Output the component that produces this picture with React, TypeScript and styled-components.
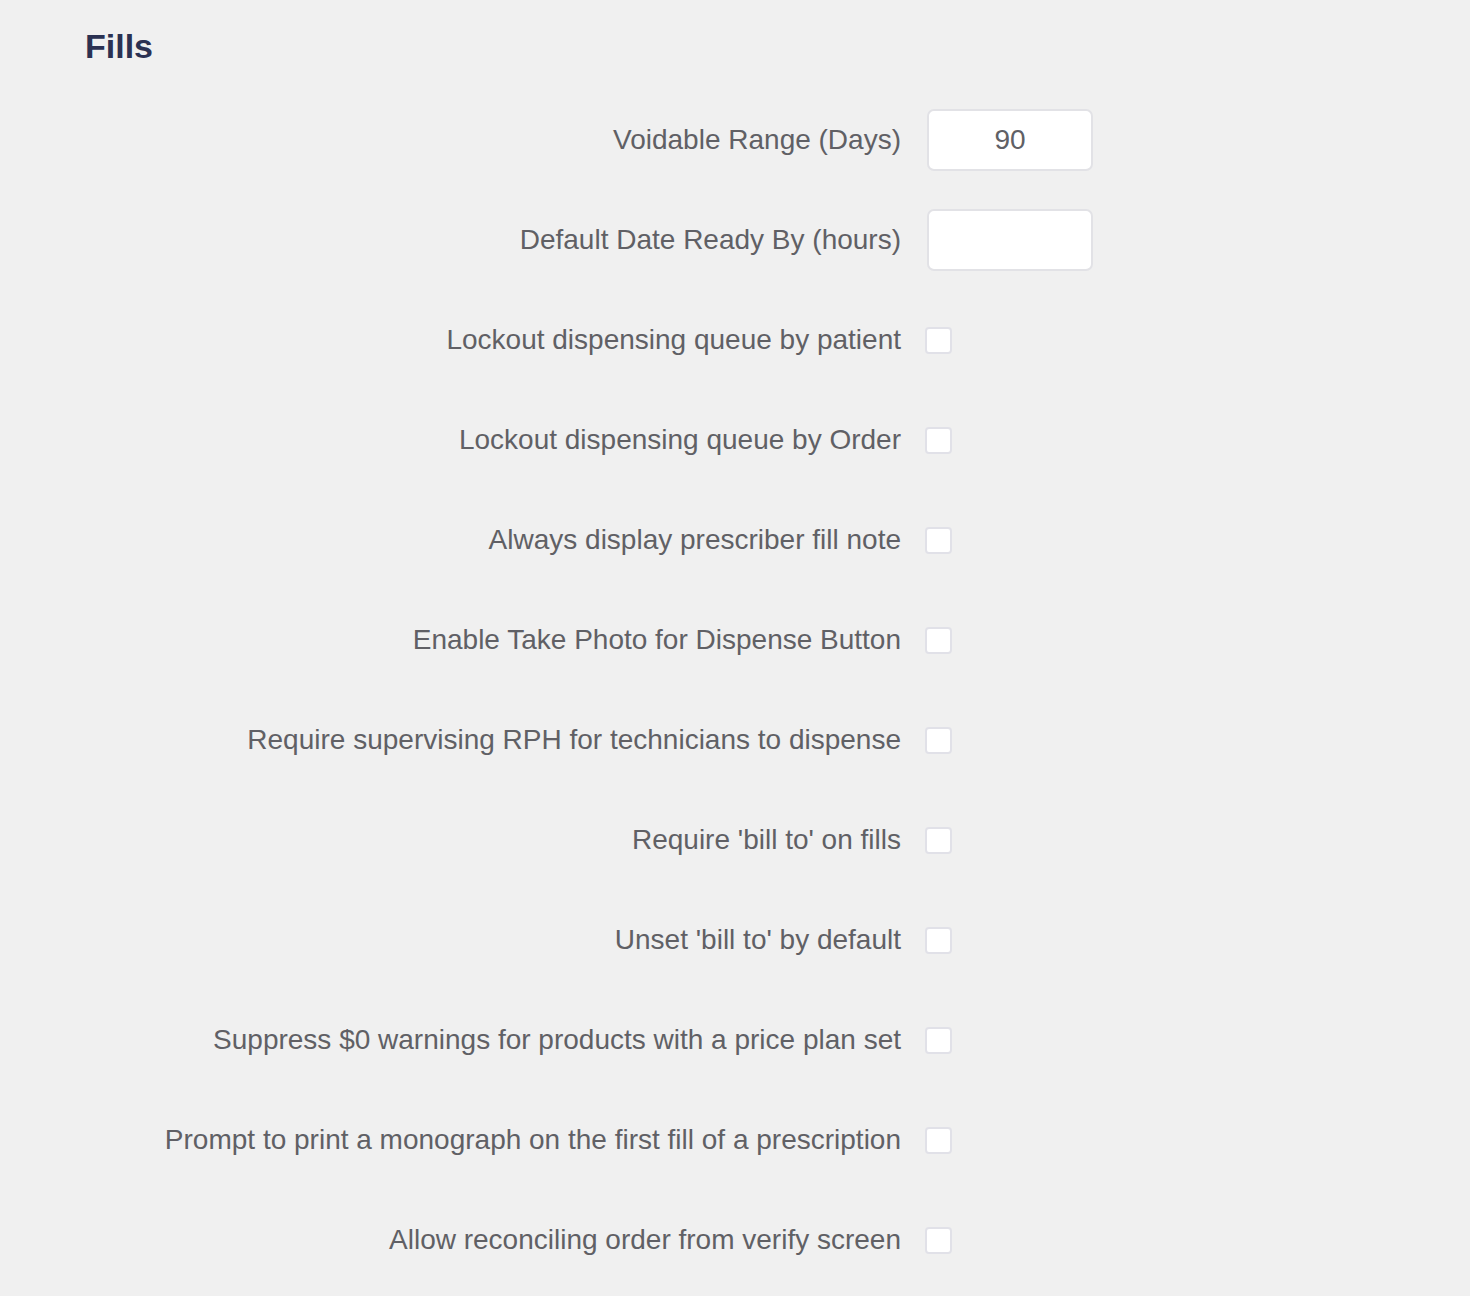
import React from "react";
import styled, { createGlobalStyle } from "styled-components";

const GlobalStyle = createGlobalStyle`
  html, body {
    margin: 0;
    padding: 0;
    background: #f0f0f0;
    font-family: "Liberation Sans", Arial, Helvetica, sans-serif;
  }
`;

const Page = styled.div`
  min-height: 1296px;
  background: #f0f0f0;
  padding: 26px 0 40px 85px;
  box-sizing: border-box;
`;

const Title = styled.h2`
  margin: 0 0 43px 0;
  font-size: 34px;
  line-height: 40px;
  font-weight: 700;
  color: #2b3152;
`;

const Form = styled.div`
  display: grid;
  grid-template-columns: 816px 1fr;
  grid-auto-rows: 62px;
  column-gap: 24px;
  row-gap: 38px;
  align-items: center;
`;

const Label = styled.label`
  text-align: right;
  font-size: 28px;
  color: #606065;
  white-space: nowrap;
`;

const TextInput = styled.input`
  width: 166px;
  height: 62px;
  box-sizing: border-box;
  border: 2px solid #e2e2e6;
  border-radius: 7px;
  background: #fff;
  text-align: center;
  font-family: inherit;
  font-size: 28px;
  color: #606065;
  outline: none;
  margin-left: 2px;
`;

const Check = styled.span`
  display: block;
  width: 27px;
  height: 27px;
  box-sizing: border-box;
  border: 2px solid #e1e1e8;
  border-radius: 4px;
  background: #fff;
`;

const inputs = [
  { label: "Voidable Range (Days)", value: "90" },
  { label: "Default Date Ready By (hours)", value: "" },
];

const checks = [
  "Lockout dispensing queue by patient",
  "Lockout dispensing queue by Order",
  "Always display prescriber fill note",
  "Enable Take Photo for Dispense Button",
  "Require supervising RPH for technicians to dispense",
  "Require 'bill to' on fills",
  "Unset 'bill to' by default",
  "Suppress $0 warnings for products with a price plan set",
  "Prompt to print a monograph on the first fill of a prescription",
  "Allow reconciling order from verify screen",
];

export default function App() {
  return (
    <>
      <GlobalStyle />
      <Page>
        <Title>Fills</Title>
        <Form>
          {inputs.map((f) => (
            <React.Fragment key={f.label}>
              <Label>{f.label}</Label>
              <TextInput defaultValue={f.value} />
            </React.Fragment>
          ))}
          {checks.map((c) => (
            <React.Fragment key={c}>
              <Label>{c}</Label>
              <Check />
            </React.Fragment>
          ))}
        </Form>
      </Page>
    </>
  );
}
